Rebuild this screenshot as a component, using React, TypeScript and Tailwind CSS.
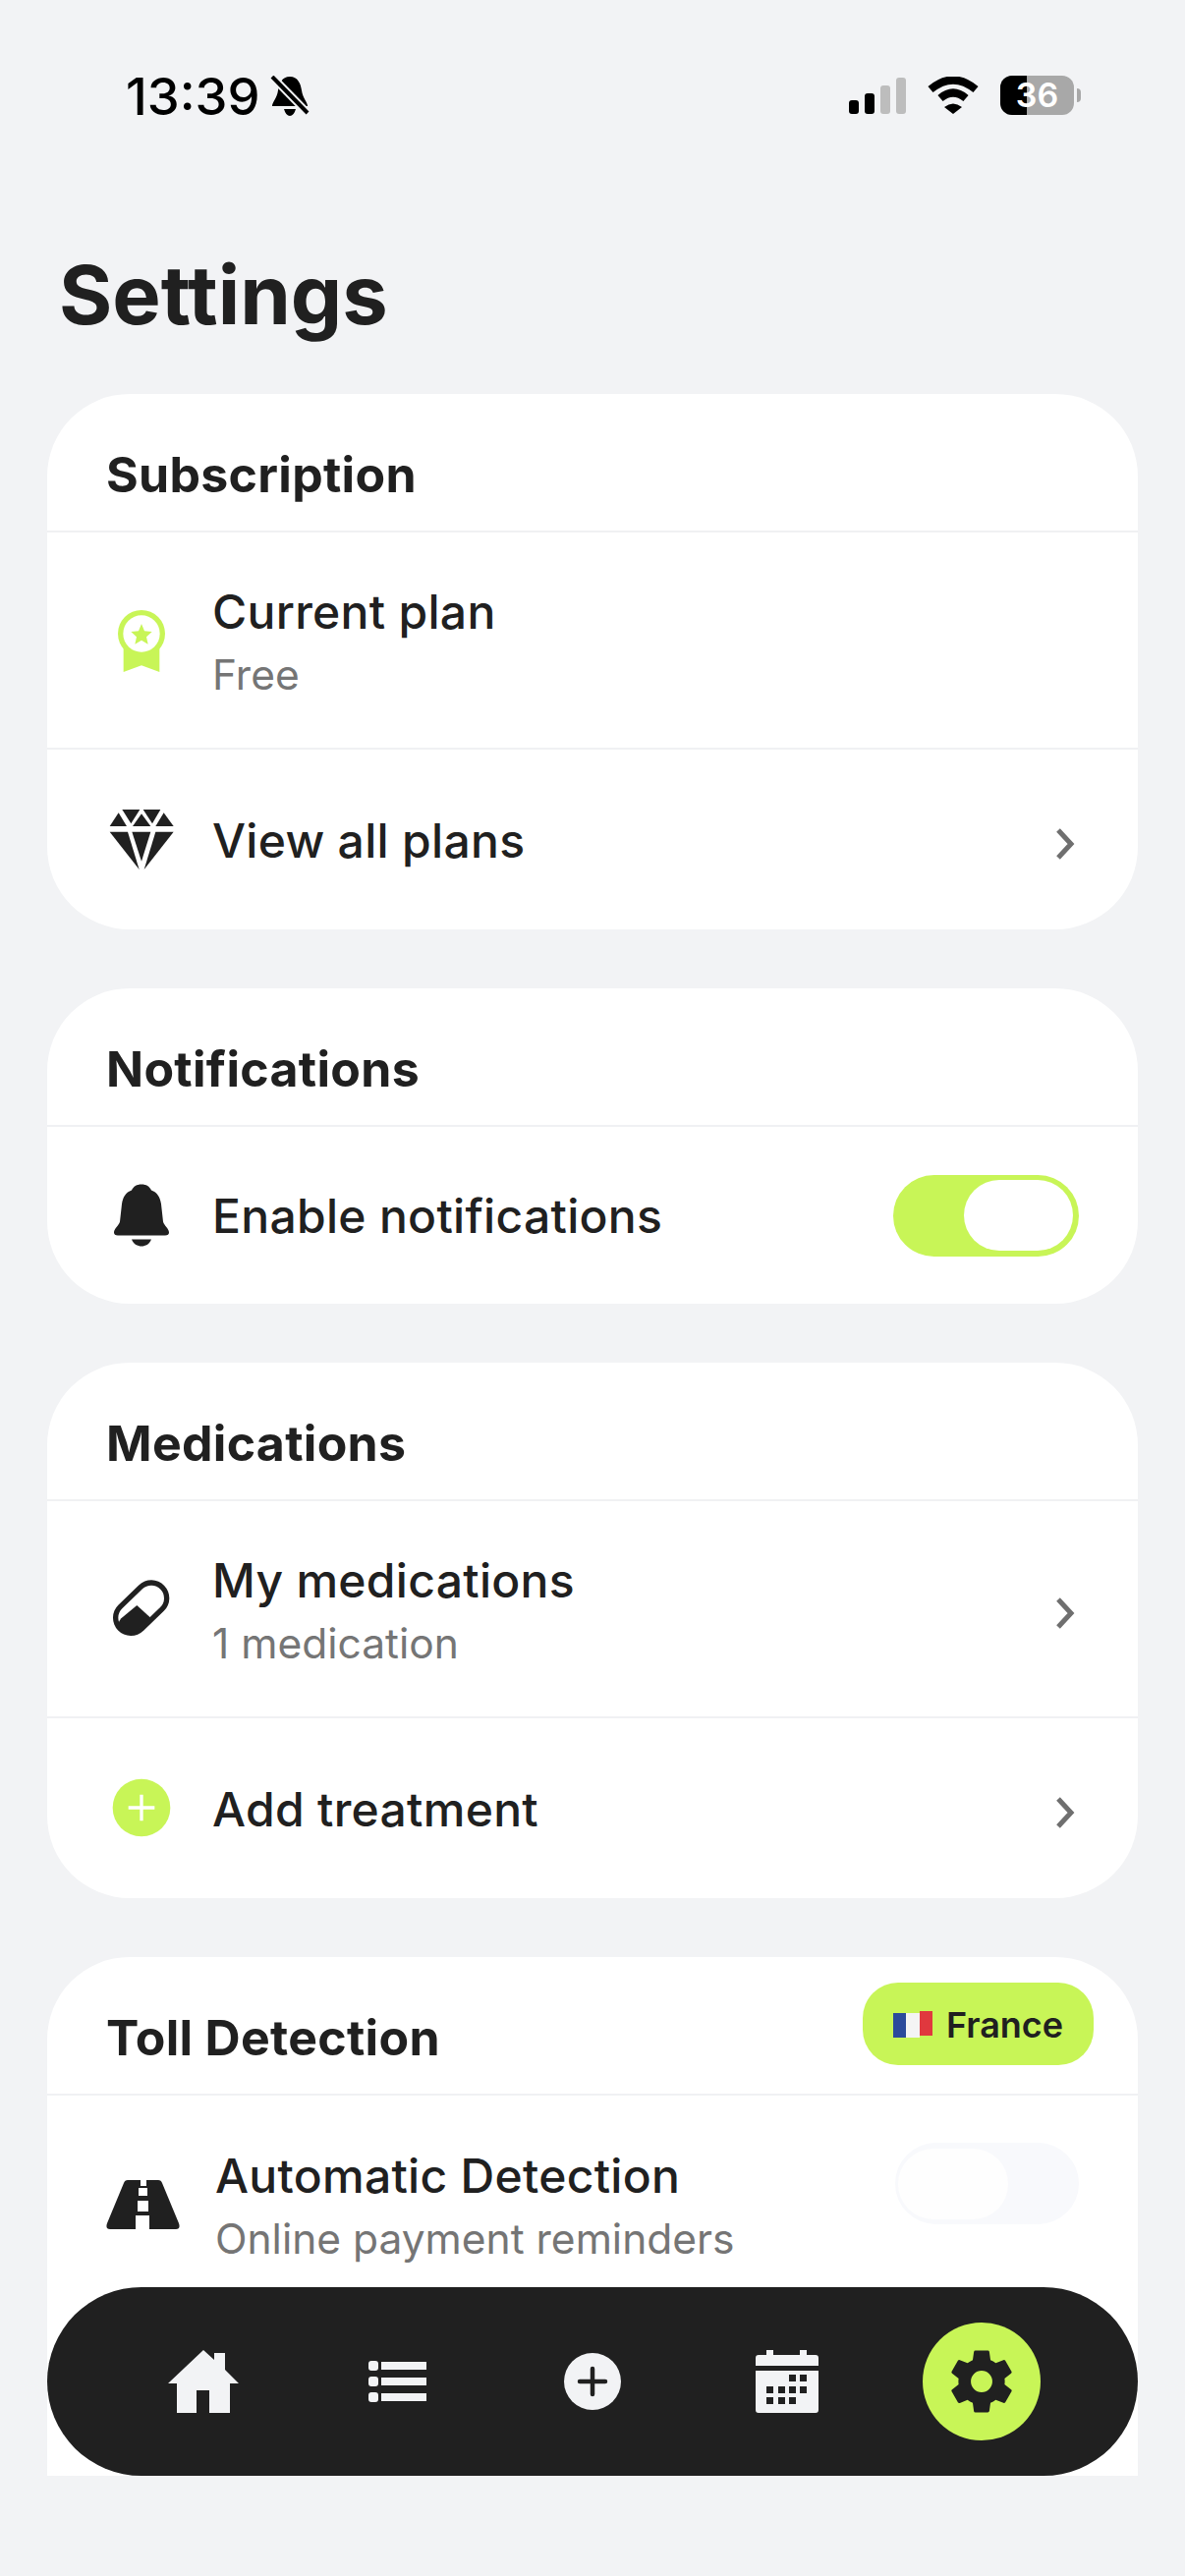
import { IoSettingsSharp } from "react-icons/io5";

const LIME = "#c8f557";

function Chevron() {
  return (
    <svg viewBox="0 0 22 34" className="mt-[8px] mr-[3px] ml-auto h-[34px] w-[22px] shrink-0 fill-none stroke-[#6f6f6f] stroke-[5]">
      <path d="M4 3 L17 17 L4 31" />
    </svg>
  );
}

function Toggle({ on }: { on: boolean }) {
  if (on) {
    return (
      <div className="ml-auto flex h-[83px] w-[189px] shrink-0 items-center justify-end rounded-full bg-[#c8f557] pr-[6px]">
        <div className="h-[72px] w-[111px] rounded-full bg-white" />
      </div>
    );
  }
  return (
    <div className="-mt-[42px] ml-auto flex h-[83px] w-[187px] shrink-0 items-center rounded-full bg-[#f8f9fc] pl-[3px]">
      <div className="h-[72px] w-[112px] rounded-full bg-[#fefefe]" />
    </div>
  );
}

function AwardIcon() {
  return (
    <svg viewBox="84 171 216 216" className="h-[72px] w-[72px]">
      <path d="M137 300 V375 L192 355 L247 375 V300 Z" fill={LIME} />
      <circle cx="192" cy="258" r="72" fill={LIME} />
      <circle cx="192" cy="258" r="56" fill="#fff" />
      <path d="M192 228 L201 250 L224 252 L207 268 L212 290 L192 278 L172 290 L177 268 L160 252 L183 250 Z" fill={LIME} />
    </svg>
  );
}

function GemIcon() {
  return (
    <svg viewBox="84 777 216 216" className="h-[72px] w-[72px] fill-[#202020]">
      <path d="M95 843 L122 802 L147 843 Z" />
      <path d="M133 792 H187 L160 835 Z" />
      <path d="M165 843 L192 805 L220 843 Z" />
      <path d="M197 792 H250 L225 835 Z" />
      <path d="M235 843 L260 802 L290 843 Z" />
      <path d="M95 860 H150 L185 975 Z" />
      <path d="M163 860 H220 L192 950 Z" />
      <path d="M235 860 H290 L200 975 Z" />
    </svg>
  );
}

function BellIcon() {
  return (
    <svg viewBox="-8 -4.5 72 72" className="h-[72px] w-[72px] fill-[#202020]">
      <path d="M28 0 C33 0 36 2 38 6 C44 8 47 13 48 20 L50 38 C51 42 56 45 56 49 Q56 52 52 52 H4 Q0 52 0 49 C0 45 5 42 6 38 L8 20 C9 13 12 8 18 6 C20 2 23 0 28 0 Z" />
      <path d="M18 56 H38 C36 61 32 63 28 63 C24 63 20 61 18 56 Z" />
    </svg>
  );
}

function PillIcon() {
  return (
    <svg viewBox="84 186 216 216" className="h-[72px] w-[72px]">
      <line x1="160" y1="320" x2="222" y2="260" stroke="#202020" strokeWidth="110" strokeLinecap="round" />
      <line x1="160" y1="320" x2="222" y2="260" stroke="#fff" strokeWidth="78" strokeLinecap="round" />
      <path d="M178 282 L220 320 L175 362 Q150 375 128 355 Q115 338 130 322 Z" fill="#202020" />
    </svg>
  );
}

function AddIcon() {
  return (
    <svg viewBox="84 795 216 216" className="h-[72px] w-[72px]">
      <circle cx="192" cy="900" r="88" fill={LIME} />
      <path d="M152 900 H232 M192 860 V940" stroke="#fff" strokeWidth="10" />
    </svg>
  );
}

function RoadIcon() {
  return (
    <svg viewBox="0 0 75 50" className="h-[50px] w-[75px]">
      <path
        fillRule="evenodd"
        fill="#202020"
        d="M22 0 H35 V6 H41 V0 H53 Q56 0 57 3 L74 44 Q76 50 71 50 H44 V36 H30 V50 H4 Q-1 50 1 44 L18 3 Q19 0 22 0 Z M33 8 V16 H42 V8 Z M32 21 V32 H43 V21 Z"
      />
    </svg>
  );
}

function Row({
  icon,
  title,
  sub,
  trailing,
  h,
  last,
}: {
  icon: React.ReactNode;
  title: string;
  sub?: string;
  trailing?: React.ReactNode;
  h: string;
  last?: boolean;
}) {
  return (
    <div className={`flex items-center gap-[36px] pl-[60px] pr-[60px] ${h} ${last ? "" : "border-b-2 border-[#f0f1f3]"}`}>
      <div className="flex shrink-0 items-center justify-center">{icon}</div>
      <div className="flex flex-col pt-[2px]">
        <span className="text-[48px] leading-[60px] font-medium tracking-[0.3px] text-[#202020]">{title}</span>
        {sub && <span className="mt-[8px] text-[42.5px] leading-[52px] text-[#757575]">{sub}</span>}
      </div>
      {trailing}
    </div>
  );
}

function CardHeader({ title, badge }: { title: string; badge?: boolean }) {
  return (
    <div className="relative h-[141px] border-b-2 border-[#f0f1f3] pl-[60px] pt-[51px]">
      <h2 className="text-[50px] leading-[62px] font-bold tracking-[0.3px] text-[#202020]">{title}</h2>
      {badge && (
        <div className="absolute top-[26px] right-[45px] flex h-[84px] w-[235px] items-center justify-center gap-[14px] rounded-[36px] bg-[#c8f557] pt-[2px]">
          <svg viewBox="0 0 40 30" className="h-[30px] w-[40px]">
            <path d="M0 3 H13 V28 H0 Z" fill="#2b4a9b" />
            <path d="M13 3 H27 V28 H13 Z" fill="#f4f4f4" />
            <path d="M27 1 H40 V26 H27 Z" fill="#e0383e" />
          </svg>
          <span className="text-[36px] leading-none font-semibold text-[#202020]">France</span>
        </div>
      )}
    </div>
  );
}

function StatusBar() {
  return (
    <div className="flex h-[250px] items-start justify-between pl-[128px] pr-[106px] pt-[73px]">
      <div className="flex items-center gap-[10px]">
        <span className="text-[52.5px] leading-[50px] font-medium text-black">13:39</span>
        <svg viewBox="0 0 40 42" className="h-[42px] w-[40px]">
          <path d="M20 1 C28 1 31 8 32 15 C33 23 38 27 38 31 H2 C2 27 7 23 8 15 C9 8 12 1 20 1 Z M14 34 H26 Q24 41 20 41 Q16 41 14 34 Z" fill="#000" />
          <path d="M2 1 L38 38" stroke="#f2f3f5" strokeWidth="8" />
          <path d="M2 1 L38 38" stroke="#000" strokeWidth="4" />
        </svg>
      </div>
      <div className="flex items-center gap-[22px] pt-[4px]">
        <div className="flex h-[37px] items-end gap-[6px]">
          <div className="h-[14px] w-[10px] rounded-[3px] bg-black" />
          <div className="h-[21px] w-[10px] rounded-[3px] bg-black" />
          <div className="h-[29px] w-[10px] rounded-[3px] bg-[#bdbdbd]" />
          <div className="h-[37px] w-[10px] rounded-[3px] bg-[#bdbdbd]" />
        </div>
        <svg viewBox="0 0 52 38" className="h-[38px] w-[52px] fill-none stroke-black">
          <path d="M3 13 Q26 -6 49 13" strokeWidth="8" />
          <path d="M13 22 Q26 11 39 22" strokeWidth="8" />
          <path d="M17 31 Q26 24 35 31 L26 38 Z" fill="#000" stroke="none" />
        </svg>
        <div className="flex items-center gap-[3px]">
          <div className="relative flex h-[40px] w-[75px] items-center justify-center overflow-hidden rounded-[12px] bg-[#a8a8a8]">
            <div className="absolute inset-y-0 left-0 w-[27px] bg-black" />
            <span className="relative text-[34px] leading-none font-semibold text-white">36</span>
          </div>
          <div className="h-[14px] w-[4px] rounded-r-full bg-[#a8a8a8]" />
        </div>
      </div>
    </div>
  );
}

function BottomNav() {
  return (
    <nav className="absolute top-[2328px] left-[48px] flex h-[192px] w-[1110px] items-center rounded-[96px] bg-[#202020] px-[60px]">
      <div className="flex flex-1 justify-center">
        <svg viewBox="0 0 72 64" className="h-[64px] w-[72px] fill-[#f2f3f5]">
          <path d="M36 0 L47 10 V3 H58 V20 L72 34 H63 V64 H42 V41 H29 V64 H9 V34 H0 Z" />
        </svg>
      </div>
      <div className="flex flex-1 justify-center">
        <svg viewBox="0 0 60 42" className="h-[42px] w-[60px] fill-[#f2f3f5]">
          <rect x="0" y="0" width="10" height="10" rx="3" />
          <rect x="0" y="16" width="10" height="10" rx="3" />
          <rect x="0" y="32" width="10" height="10" rx="3" />
          <rect x="13" y="1" width="46" height="8" />
          <rect x="13" y="17" width="46" height="8" />
          <rect x="13" y="33" width="46" height="8" />
        </svg>
      </div>
      <div className="flex flex-1 justify-center">
        <svg viewBox="0 0 58 58" className="h-[58px] w-[58px]">
          <circle cx="29" cy="29" r="29" fill="#f2f3f5" />
          <path d="M16 29 H42 M29 16 V42" stroke="#202020" strokeWidth="4.5" strokeLinecap="round" />
        </svg>
      </div>
      <div className="flex flex-1 justify-center">
        <svg viewBox="0 0 64 64" className="h-[64px] w-[64px] fill-[#f2f3f5]">
          <path d="M11 0 H18 V5 H45 V0 H52 V5 H61 Q64 5 64 8 V16 H0 V8 Q0 5 3 5 H11 Z" />
          <path fillRule="evenodd" d="M0 21 H64 V61 Q64 64 61 64 H3 Q0 64 0 61 Z M34 25 V32 H41 V25 Z M45 25 V32 H52 V25 Z M11 37 V44 H18 V37 Z M23 37 V44 H30 V37 Z M34 37 V44 H41 V37 Z M45 37 V44 H52 V37 Z M11 48 V55 H18 V48 Z M23 48 V55 H30 V48 Z M34 48 V55 H41 V48 Z" />
        </svg>
      </div>
      <div className="flex flex-1 justify-center">
        <div className="flex h-[120px] w-[120px] items-center justify-center rounded-full bg-[#c8f557]">
          <IoSettingsSharp className="h-[70px] w-[70px] text-[#202020]" />
        </div>
      </div>
    </nav>
  );
}

export default function App() {
  return (
    <div className="relative h-[2622px] w-[1206px] overflow-hidden bg-[#f2f3f5] font-['Inter',sans-serif]">
      <StatusBar />
      <div className="h-[2270px] overflow-hidden">
        <h1 className="pl-[60px] text-[83px] leading-[100px] font-bold text-[#202020]">Settings</h1>
        <div className="mx-[48px] mt-[51px] flex flex-col gap-[60px]">
          <section className="rounded-[84px] bg-white">
            <CardHeader title="Subscription" />
            <Row h="h-[221px]" icon={<AwardIcon />} title="Current plan" sub="Free" />
            <Row h="h-[183px]" last icon={<GemIcon />} title="View all plans" trailing={<Chevron />} />
          </section>
          <section className="rounded-[84px] bg-white">
            <CardHeader title="Notifications" />
            <Row h="h-[180px]" last icon={<BellIcon />} title="Enable notifications" trailing={<Toggle on />} />
          </section>
          <section className="rounded-[84px] bg-white">
            <CardHeader title="Medications" />
            <Row h="h-[221px]" icon={<PillIcon />} title="My medications" sub="1 medication" trailing={<Chevron />} />
            <Row h="h-[183px]" last icon={<AddIcon />} title="Add treatment" trailing={<Chevron />} />
          </section>
          {/* rest of this card scrolls under the nav */}
          <section className="rounded-[84px] bg-white pb-[300px]">
            <CardHeader title="Toll Detection" badge />
            <Row h="h-[221px]" last icon={<RoadIcon />} title="Automatic Detection" sub="Online payment reminders" trailing={<Toggle on={false} />} />
          </section>
        </div>
      </div>
      <BottomNav />
    </div>
  );
}
